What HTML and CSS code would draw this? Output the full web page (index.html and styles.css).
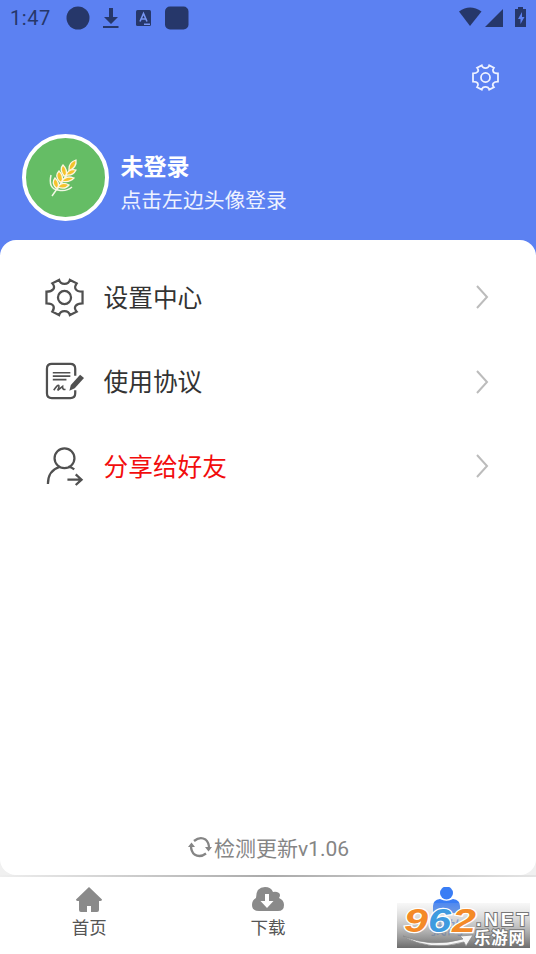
FILE: index.html
```html
<!DOCTYPE html>
<html lang="zh-CN">
<head>
    <meta charset="UTF-8">
    <meta name="viewport" content="width=device-width, initial-scale=1.0">
    <title>我的</title>
    <link rel="stylesheet" href="styles.css">
</head>
<body>
    <!-- Gear outline shared by the header and the menu -->
    <svg class="defs" width="0" height="0">
        <symbol id="gear" viewBox="0 0 40 40">
            <path d="M14.500 2Q15.500 6 20 6T25.500 2L32.500 5.500Q30 9 31.500 11.500T38.500 14V26Q33.500 26 31.500 28.500T32.500 34.500L25.500 38Q24.500 34 20 34T14.500 38L7.500 34.500Q10 31 8.500 28.500T1.500 26V14Q6.500 14 8.500 11.500T7.500 5.500Z"/>
            <circle cx="20" cy="20" r="6.700"/>
        </symbol>
    </svg>

    <div class="app">
        <header class="header">
            <div class="status-bar">
                <span class="time">1:47</span>
                <svg class="status-left" width="124" height="26" viewBox="0 0 124 26">
                    <circle cx="12" cy="13" r="11.500"/>
                    <path d="M43 3h4v9h5l-7 7-7-7h5zM37 21h15.500v2H37z"/>
                    <rect x="70" y="5" width="15" height="16" rx="1.500"/>
                    <path class="letter" d="M74 16.500l3.500-8 3.500 8M75.200 14h4.600M78 19.300h6"/>
                    <rect x="99" y="1.500" width="23.500" height="23" rx="5"/>
                </svg>
                <svg class="status-right" width="70" height="24" viewBox="0 0 70 24">
                    <path d="M1 6.500q11-8 22.500 0L12 21z"/>
                    <path d="M45 4v18H27z"/>
                    <path d="M60 2h5v2h3v18H57V4h3z"/>
                    <path class="bolt" d="M64 7l-4 7h2.500v5l4-7H64z"/>
                </svg>
            </div>
            <div class="toolbar">
                <svg class="gear-small"><use href="#gear"/></svg>
            </div>
            <div class="profile">
                <div class="avatar">
                    <svg width="30" height="40" viewBox="0 0 30 40">
                        <path class="stem" d="M3 38Q13 24 24 8M2 17Q-1 31 9 32Q17 34 23 29"/>
                        <g class="grain">
                            <path d="M20 11Q20 4 27 2Q28 9 20 13z"/>
                            <path d="M15 18Q10 11 14 7Q19 12 17 18z"/>
                            <path d="M17 17Q20 10 27 12Q24 18 17 17z"/>
                            <path d="M11 24Q5 18 10 13Q15 18 13 24z"/>
                            <path d="M13 23Q17 17 25 20Q20 25 13 23z"/>
                            <path d="M7 30Q2 25 6 20Q11 25 9 30z"/>
                            <path d="M9 29Q13 23 20 27Q16 32 9 29z"/>
                        </g>
                    </svg>
                </div>
                <div class="user">
                    <div class="user-name">未登录</div>
                    <div class="user-tip">点击左边头像登录</div>
                </div>
            </div>
        </header>

        <main class="panel">
            <ul class="menu">
                <li>
                    <svg class="menu-icon" viewBox="0 0 40 40"><use href="#gear"/></svg>
                    <span>设置中心</span>
                    <svg class="arrow" viewBox="0 0 14 26"><path d="M2 2l10 11L2 24"/></svg>
                </li>
                <li>
                    <svg class="menu-icon" viewBox="0 0 40 40">
                        <path d="M31 14V7q0-5-5-5H7Q2 2 2 7v25q0 5 5 5h19q5 0 5-5v-3"/>
                        <path class="thin" d="M8 11h18M8 14.500h18M8 18h14M9 29q4-6 5-5t-1 5l5-4q0 4 3 3"/>
                        <path class="pen" d="M36 13l4 3.500-9.500 10.500-5.500 2.500 1.500-6z"/>
                    </svg>
                    <span>使用协议</span>
                    <svg class="arrow" viewBox="0 0 14 26"><path d="M2 2l10 11L2 24"/></svg>
                </li>
                <li class="share">
                    <svg class="menu-icon" viewBox="0 0 40 40">
                        <circle cx="20" cy="11.500" r="10.200"/>
                        <path d="M3 38Q3 24 15 20.500M24 20.500q3 0 6 2.500M23 33.500h14M31.500 28l6 5.500-6 5.500"/>
                    </svg>
                    <span>分享给好友</span>
                    <svg class="arrow" viewBox="0 0 14 26"><path d="M2 2l10 11L2 24"/></svg>
                </li>
            </ul>
            <div class="update">
                <svg width="24" height="22" viewBox="0 0 24 22">
                    <path d="M6 5Q12 0 17.500 3.500Q21 6.500 21 12M18 17.500Q12 22 6.500 18.500Q3 15.500 3 10"/>
                    <path class="tip" d="M17 11h7l-3.500 4.500zM0 11h7L3.500 6.500z"/>
                </svg>
                <span>检测更新v1.06</span>
            </div>
        </main>

        <nav class="tabs">
            <div class="tab">
                <svg width="28" height="26" viewBox="0 0 28 26">
                    <path d="M14 0L1 12.500q0 1.500 3 1.500v9q0 2 2 2h6v-6h4v6h6q2 0 2-2v-9q3 0 3-1.500z"/>
                </svg>
                <span>首页</span>
            </div>
            <div class="tab">
                <svg width="34" height="26" viewBox="0 0 34 26">
                    <path d="M8 24q-7 0-7-6 0-5 4-7Q5 0 14 0q6 0 8 5 3-1 6 1 2 2 0 5 5 2 5 7 0 6-6 6z"/>
                    <path class="cut" d="M14 7h4v7h4.500L16 21l-6.500-7H14z"/>
                </svg>
                <span>下载</span>
            </div>
            <div class="tab active">
                <svg width="28" height="26" viewBox="0 0 28 26">
                    <circle cx="13.500" cy="6" r="6.500"/>
                    <path d="M0 26v-7q0-6 7-7 6.500 3.500 13 0 7 1 7 7v7z"/>
                </svg>
                <span>我的</span>
            </div>
        </nav>

        <!-- Site mark over the last tab -->
        <div class="watermark">
            <svg width="133" height="59" viewBox="0 0 133 59">
                <defs>
                    <linearGradient id="shade" x1="0" y1="0" x2="0" y2="1">
                        <stop offset="0" stop-color="#ccc" stop-opacity="0.150"/>
                        <stop offset="0.500" stop-color="#aaa" stop-opacity="0.700"/>
                        <stop offset="1" stop-color="#6c6c6c"/>
                    </linearGradient>
                </defs>
                <rect y="14" width="133" height="45" fill="url(#shade)"/>
                <path class="swoosh" d="M6 47Q34 59 66 50l-3-3 13-1-7 11-2-4Q32 63 6 47z"/>
                <text class="num orange" x="7" y="43" textLength="24" lengthAdjust="spacingAndGlyphs">9</text>
                <text class="num blue" x="31" y="43" textLength="23" lengthAdjust="spacingAndGlyphs">6</text>
                <text class="num orange" x="55" y="43" textLength="24" lengthAdjust="spacingAndGlyphs">2</text>
                <text class="net" x="79" y="37" textLength="52" lengthAdjust="spacing">.NET</text>
                <text class="site" x="77" y="55" textLength="51">乐游网</text>
            </svg>
        </div>
    </div>
</body>
</html>
```
FILE: styles.css
```css
* {
    margin: 0;
    padding: 0;
    box-sizing: border-box;
}

body {
    font-family: Roboto, "Noto Sans CJK SC", sans-serif;
    background-color: #fff;
    color: #333;
}

svg {
    display: block;
    flex-shrink: 0;
}

.defs {
    position: absolute;
}

.app {
    position: relative;
    display: flex;
    flex-direction: column;
    height: 954px;
    overflow: hidden;
    background-color: #f0f0f0;
}

/* Header */
.header {
    height: 260px;
    margin-bottom: -20px;
    background-color: #5c81f2;
    flex-shrink: 0;
}

.status-bar {
    display: flex;
    align-items: center;
    height: 37px;
    padding: 0 8px 1px 10px;
    color: #26376a;
    fill: #26376a;
}

.time {
    width: 56px;
    font-size: 20px;
    letter-spacing: 0.6px;
}

.status-right {
    margin-left: auto;
    margin-bottom: 2px;
}

.letter {
    fill: none;
    stroke: #7795f2;
    stroke-width: 1.6;
}

.bolt {
    fill: #5c81f2;
}

.toolbar {
    display: flex;
    justify-content: flex-end;
    padding: 27px 37px 0 0;
}

.gear-small {
    width: 27px;
    height: 27px;
    fill: none;
    stroke: #eef2ff;
    stroke-width: 2.6;
}

.profile {
    display: flex;
    align-items: center;
    padding: 43px 0 0 22px;
}

.avatar {
    display: flex;
    align-items: center;
    justify-content: center;
    width: 87px;
    height: 87px;
    margin-right: 11.5px;
    padding-right: 4px;
    background-color: #65bd65;
    border: 4px solid #fff;
    border-radius: 50%;
}

.stem {
    fill: none;
    stroke: #f2f8e4;
    stroke-width: 1.5;
}

.grain {
    fill: #f5c32c;
    stroke: #fff6dc;
    stroke-width: 1.3;
}

.user {
    color: #fff;
    padding-top: 13px;
}

.user-name {
    font-size: 23px;
    font-weight: 700;
    line-height: 34px;
}

.user-tip {
    font-size: 20.8px;
    line-height: 32px;
    color: #eef2ff;
}

/* White panel */
.panel {
    display: flex;
    flex-direction: column;
    height: 635px;
    background-color: #fff;
    border-radius: 16px;
}

.menu {
    list-style: none;
    padding-top: 15px;
}

.menu li {
    display: flex;
    align-items: center;
    height: 84.5px;
    padding: 0 47px 0 45px;
    font-size: 24.7px;
}

.menu span {
    padding-bottom: 3px;
}

.menu-icon {
    width: 39px;
    height: 39px;
    margin-right: 19.5px;
    fill: none;
    stroke: #505050;
    stroke-width: 2.3;
}

.thin {
    stroke-width: 1.7;
}

.pen {
    fill: #505050;
    stroke: none;
}

.arrow {
    width: 14px;
    height: 26px;
    margin-left: auto;
    fill: none;
    stroke: #bcbcbc;
    stroke-width: 2;
}

.menu .share {
    color: #f20d0d;
}

.update {
    display: flex;
    align-items: center;
    justify-content: center;
    gap: 2px;
    height: 32px;
    margin-top: auto;
    margin-bottom: 12px;
    padding-left: 1px;
    font-size: 21px;
    color: #858585;
}

.update svg {
    fill: none;
    stroke: #858585;
    stroke-width: 2.3;
}

.update .tip {
    fill: #858585;
    stroke: none;
}

/* Bottom tabs */
.tabs {
    display: flex;
    height: 79px;
    padding-top: 2px;
    background: linear-gradient(to right, #eee, #aaa 50%, #e4e4e4) top / 100% 2px no-repeat #fff;
}

.tab {
    flex: 1;
    display: flex;
    flex-direction: column;
    align-items: center;
    padding-top: 10px;
    font-size: 17.5px;
    line-height: 30px;
    color: #555;
    fill: #8a8a8a;
}

.tab .cut {
    fill: #fff;
}

.tab.active {
    color: #397df5;
    fill: #397df5;
}

.watermark {
    position: absolute;
    left: 397px;
    top: 889px;
}

.swoosh {
    fill: #f5f5f5;
    stroke: #888;
    stroke-width: 0.7;
}

.num {
    font: italic 700 34px "Liberation Sans", sans-serif;
    stroke: #fff;
    stroke-width: 2.4px;
    paint-order: stroke;
}

.orange {
    fill: #f48a27;
}

.blue {
    fill: #3f9bdf;
}

.net,
.site {
    fill: #fff;
    stroke: #777;
    stroke-width: 2px;
    paint-order: stroke;
}

.net {
    font: 700 19px "Liberation Sans", sans-serif;
}

.site {
    font: 700 16.5px "Noto Sans CJK SC", sans-serif;
}
```
